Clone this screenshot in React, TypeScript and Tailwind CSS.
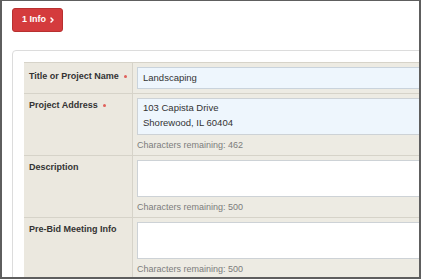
import { ChevronRight } from "lucide-react";

const Dot = () => <span className="ml-[5px] inline-block h-[3px] w-[3px] rounded-full bg-[#e0605a] align-middle" />;

function TextRow({ label, required, value, remaining }: { label: string; required?: boolean; value?: string[]; remaining: number }) {
  return (
    <div className="flex border-b border-[#d6d3c9]">
      <div className="w-[108px] shrink-0 bg-[#ebe8df] pl-[5px] pt-[5px] text-[9px] font-bold leading-[12px] text-[#333]">
        {label}
        {required && <Dot />}
      </div>
      <div className="flex-1 border-l border-[#d6d3c9] bg-[#edebe3] pl-[4px] pt-[4px]">
        <div
          className={`h-[37px] border border-[#cdd2d6] pl-[5px] pt-[1px] text-[9.5px] leading-[15px] text-[#333] ${
            value ? "bg-[#eef6fd]" : "bg-white"
          }`}
        >
          {value?.map((line) => (
            <div key={line}>{line}</div>
          ))}
        </div>
        <div className="h-[20px] text-[9px] leading-[20px] text-[#7c7c7c]">Characters remaining: {remaining}</div>
      </div>
    </div>
  );
}

export default function App() {
  return (
    <div className="h-[280px] w-[423px] overflow-hidden bg-white font-['Liberation_Sans',Arial,sans-serif]">
      <div className="h-[279px] w-[421px] overflow-hidden border-2 border-l-2 border-t border-[#5e5e5e] pl-[10px] pt-[7px]">
        <div className="flex h-[24px] w-[51px] items-center gap-[2px] rounded-[3px] border border-[#b8302f] bg-[#d43b3d] pl-[9px] text-[9px] font-bold text-white">
          1 Info
          <ChevronRight size={8} strokeWidth={4.5} />
        </div>

        <div className="mt-[18px] w-[440px] rounded-tl-[4px] border border-[#dcdcdc] bg-white pl-[11px] pt-[11px]">
          <div className="flex flex-col border-t border-[#d6d3c9]">
            <div className="flex border-b border-[#d6d3c9]">
              <div className="w-[108px] shrink-0 bg-[#ebe8df] pl-[5px] pt-[7px] text-[9px] font-bold leading-[12px] text-[#333]">
                Title or Project Name
                <Dot />
              </div>
              <div className="flex-1 border-l border-[#d6d3c9] bg-[#edebe3] py-[4px] pl-[4px]">
                <div className="h-[22px] border border-[#c9d3dc] bg-[#eef6fd] pl-[5px] text-[9.5px] leading-[20px] text-[#333]">
                  Landscaping
                </div>
              </div>
            </div>
            <TextRow label="Project Address" required value={["103 Capista Drive", "Shorewood, IL 60404"]} remaining={462} />
            <TextRow label="Description" remaining={500} />
            <TextRow label="Pre-Bid Meeting Info" remaining={500} />
          </div>
        </div>
      </div>
    </div>
  );
}
